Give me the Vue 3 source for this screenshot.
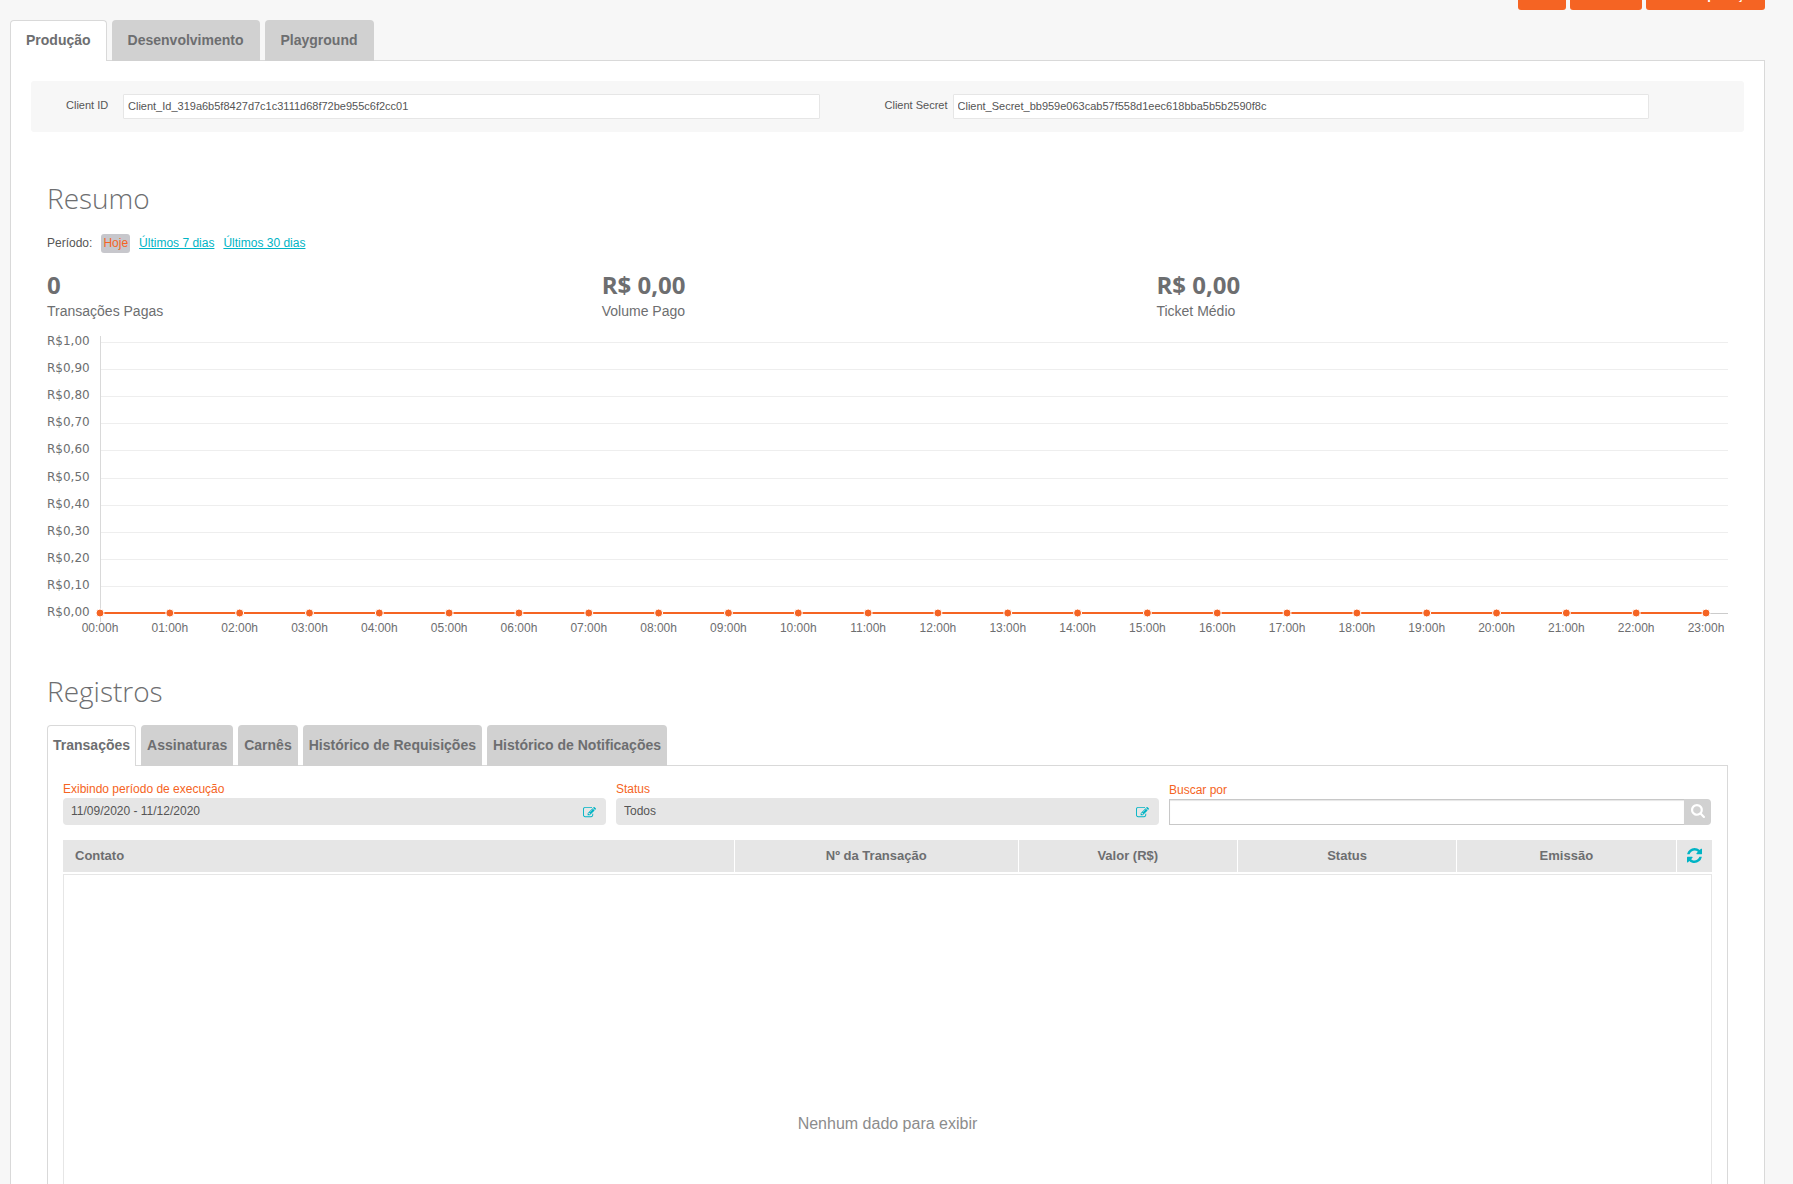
<script setup>
import { ref } from 'vue'

const environments = ['Produção', 'Desenvolvimento', 'Playground']
const environment = ref('Produção')

const clientId = ref('Client_Id_319a6b5f8427d7c1c3111d68f72be955c6f2cc01')
const clientSecret = ref('Client_Secret_bb959e063cab57f558d1eec618bba5b5b2590f8c')

const periods = ['Hoje', 'Últimos 7 dias', 'Últimos 30 dias']
const period = ref('Hoje')

const stats = [
  { value: '0', label: 'Transações Pagas' },
  { value: 'R$ 0,00', label: 'Volume Pago' },
  { value: 'R$ 0,00', label: 'Ticket Médio' },
]

const baseY = 277
const rows = Array.from({ length: 11 }, (_, i) => ({
  label: 'R$' + (i / 10).toFixed(2).replace('.', ','),
  y: Math.round(baseY - i * 27.1),
}))

const lastPoint = 98.65
const hours = Array.from({ length: 24 }, (_, i) => ({
  label: String(i).padStart(2, '0') + ':00h',
  x: (i * lastPoint) / 23 + '%',
}))

const records = [
  'Transações',
  'Assinaturas',
  'Carnês',
  'Histórico de Requisições',
  'Histórico de Notificações',
]
const record = ref('Transações')
const status = ref('Todos')
const search = ref('')

const editIcon =
  'M888 1184l116-116-152-152-116 116v56h96v96h56zm440-720q-16-16-33 1l-350 350q-17 17-1 33t33-1l350-350q17-17 1-33zm80 594v190q0 119-84.500 203.500t-203.500 84.500h-832q-119 0-203.500-84.500t-84.500-203.500v-832q0-119 84.500-203.500t203.500-84.500h832q63 0 117 25 15 7 18 23 3 17-9 29l-49 49q-14 14-32 8-23-6-45-6h-832q-66 0-113 47t-47 113v832q0 66 47 113t113 47h832q66 0 113-47t47-113v-126q0-13 9-22l64-64q15-15 35-7t20 29zm-96-738l288 288-672 672h-288v-288zm444 132l-92 92-288-288 92-92q28-28 68-28t68 28l152 152q28 28 28 68t-28 68z'
</script>

<template>
  <div class="page">
    <header class="actions">
      <button type="button" class="action short"></button>
      <button type="button" class="action medium"></button>
      <button type="button" class="action long">+ Nova Aplicação</button>
    </header>

    <nav class="tabs">
      <button
        v-for="name in environments"
        :key="name"
        type="button"
        class="tab"
        :class="{ active: name === environment }"
        @click="environment = name"
      >{{ name }}</button>
    </nav>

    <main class="panel">
      <form class="credentials" @submit.prevent>
        <label for="client-id">Client ID</label>
        <input id="client-id" v-model="clientId" type="text" readonly />
        <label for="client-secret" class="second">Client Secret</label>
        <input id="client-secret" v-model="clientSecret" type="text" readonly />
      </form>

      <section class="summary">
        <h2>Resumo</h2>
        <div class="periods">
          <span>Período:</span>
          <a
            v-for="name in periods"
            :key="name"
            href="#"
            :class="{ active: name === period }"
            @click.prevent="period = name"
          >{{ name }}</a>
        </div>
        <div class="stats">
          <div v-for="stat in stats" :key="stat.label" class="stat">
            <strong>{{ stat.value }}</strong>
            <span>{{ stat.label }}</span>
          </div>
        </div>

        <div class="chart">
          <svg height="300">
            <g v-for="row in rows" :key="row.label">
              <rect x="0" :y="row.y" width="100%" height="1" :class="row.y === baseY ? 'axis' : 'rule'" />
              <text x="-53" :y="row.y + 3" class="amount">{{ row.label }}</text>
            </g>
            <rect x="0" y="0" width="1" height="286" class="side" />
            <rect x="0" :y="baseY - 1" :width="lastPoint + '%'" height="2" class="series" />
            <g v-for="hour in hours" :key="hour.label">
              <circle :cx="hour.x" :cy="baseY" r="4" class="point" />
              <text :x="hour.x" :y="baseY + 19" class="hour">{{ hour.label }}</text>
            </g>
          </svg>
        </div>
      </section>

      <section class="records">
        <h2>Registros</h2>
        <nav class="tabs">
          <button
            v-for="name in records"
            :key="name"
            type="button"
            class="tab compact"
            :class="{ active: name === record }"
            @click="record = name"
          >{{ name }}</button>
        </nav>

        <div class="box">
          <form class="filters" @submit.prevent>
            <div class="filter">
              <label for="range">Exibindo período de execução</label>
              <div class="field">
                <button id="range" type="button" class="control">11/09/2020 - 11/12/2020</button>
                <svg class="edit" viewBox="0 0 1792 1792"><path :d="editIcon" /></svg>
              </div>
            </div>
            <div class="filter">
              <label for="status">Status</label>
              <div class="field">
                <select id="status" v-model="status" class="control">
                  <option>Todos</option>
                </select>
                <svg class="edit" viewBox="0 0 1792 1792"><path :d="editIcon" /></svg>
              </div>
            </div>
            <div class="filter">
              <label for="search" class="tall">Buscar por</label>
              <div class="search">
                <input id="search" v-model="search" type="text" />
                <button type="submit" aria-label="Buscar">
                  <svg viewBox="64 128 1664 1664" width="14" height="14">
                    <path d="M1216 832q0-185-131.500-316.500t-316.500-131.500-316.500 131.500-131.500 316.500 131.500 316.500 316.500 131.500 316.500-131.500 131.500-316.500zm512 832q0 52-38 90t-90 38q-54 0-90-38l-343-342q-179 124-399 124-143 0-273.500-55.500t-225-150-150-225-55.500-273.500 55.500-273.500 150-225 225-150 273.500-55.500 273.500 55.500 225 150 150 225 55.500 273.500q0 220-124 399l343 343q37 37 37 90z" />
                  </svg>
                </button>
              </div>
            </div>
          </form>

          <table>
            <colgroup>
              <col class="contact" />
              <col class="number" />
              <col class="regular" />
              <col class="regular" />
              <col class="regular" />
              <col />
            </colgroup>
            <thead>
              <tr>
                <th class="start">Contato</th>
                <th>Nº da Transação</th>
                <th>Valor (R$)</th>
                <th>Status</th>
                <th>Emissão</th>
                <th>
                  <button type="button" class="refresh" aria-label="Atualizar">
                    <svg viewBox="0 0 1536 1536" width="15" height="15">
                      <path d="M1511 928q0 5-1 7-64 268-268 434.500t-478 166.500q-146 0-282.500-55t-243.500-157l-129 129q-19 19-45 19t-45-19-19-45v-448q0-26 19-45t45-19h448q26 0 45 19t19 45-19 45l-137 137q71 66 161 102t187 36q134 0 250-65t186-179q11-17 53-117 8-23 30-23h192q13 0 22.500 9.500t9.500 22.500zm25-800v448q0 26-19 45t-45 19h-448q-26 0-45-19t-19-45 19-45l138-138q-148-137-349-137-134 0-250 65t-186 179q-11 17-53 117-8 23-30 23h-199q-13 0-22.500-9.500t-9.500-22.500v-7q65-268 270-434.500t480-166.500q146 0 284 55.500t245 156.500l130-129q19-19 45-19t45 19 19 45z" />
                    </svg>
                  </button>
                </th>
              </tr>
            </thead>
            <tbody>
              <tr>
                <td colspan="6">Nenhum dado para exibir</td>
              </tr>
            </tbody>
          </table>
        </div>
      </section>
    </main>
  </div>
</template>

<style>
html,
body {
  margin: 0;
  background: #f7f7f7;
}
</style>

<style scoped>
.page,
.page * {
  box-sizing: border-box;
}

.page {
  height: 100vh;
  overflow: hidden;
  padding: 0 28px 0 10px;
  background: #f7f7f7;
  color: #555;
  font-family: 'Liberation Sans', Arial, sans-serif;
  font-size: 12px;
}

button,
input,
select {
  margin: 0;
  font-family: inherit;
}

.actions {
  display: flex;
  justify-content: flex-end;
  align-items: flex-end;
  gap: 4px;
  height: 10px;
  margin-bottom: 10px;
}

.action {
  flex: none;
  height: 28px;
  padding: 0 5px 2px;
  border: 0;
  border-radius: 3px;
  background: #f56423;
  color: #fff;
  font-size: 13px;
  font-weight: bold;
  line-height: 16px;
}

.short {
  width: 48px;
}

.medium {
  width: 72px;
}

.long {
  width: 119px;
}

.tabs {
  position: relative;
  display: flex;
  gap: 5px;
  margin-bottom: -1px;
}

.tab {
  height: 41px;
  padding: 0 16px 1px;
  border: 0;
  border-radius: 4px 4px 0 0;
  background: #d1d1d1;
  color: #6d6e70;
  font-size: 14px;
  font-weight: bold;
}

.tab.active {
  padding: 0 15px 2px;
  border: 1px solid #d9d9d9;
  border-bottom: 0;
  background: #fff;
}

.tab.compact {
  padding: 0 6px 2px;
}

.tab.compact.active {
  padding: 0 5px 3px;
}

.panel {
  min-height: 100%;
  padding: 20px;
  border: 1px solid #d9d9d9;
  background: #fff;
}

.credentials {
  display: grid;
  grid-template-columns: 57px 1fr 133px 1fr;
  padding: 13px 95px 13px 35px;
  border-radius: 3px;
  background: #f7f7f7;
  font-size: 11px;
}

.credentials label {
  line-height: 22px;
}

.credentials .second {
  padding-right: 5px;
  text-align: right;
}

.credentials input {
  min-width: 0;
  height: 25px;
  padding: 0 4px 2px;
  border: 1px solid #e6e6e6;
  border-radius: 1px;
  background: #fff;
  color: #555;
  font-size: 11px;
}

.summary {
  padding: 46px 16px 0;
}

.records {
  padding: 35px 16px 0;
}

h2 {
  margin: 0;
  color: #6d6e70;
  font-family: 'Open Sans', sans-serif;
  font-size: 28px;
  font-weight: 300;
  line-height: 40px;
}

.periods {
  display: flex;
  gap: 9px;
  margin-top: 16px;
  line-height: 18px;
}

.periods a {
  color: #00b4c5;
}

.periods .active {
  height: 19px;
  padding: 0 2px;
  border-radius: 3px;
  background: #c7c7cc;
  color: #f56423;
  text-decoration: none;
}

.stats {
  display: flex;
  margin-top: 16px;
  color: #6d6e70;
}

.stat {
  width: 33%;
}

.stat strong,
.stat span {
  display: block;
}

.stat strong {
  font-family: 'Open Sans', sans-serif;
  font-size: 24px;
  line-height: 32px;
}

.stat span {
  font-size: 14px;
  line-height: 20px;
}

.chart {
  margin-top: 15px;
  padding-left: 53px;
}

.chart svg {
  display: block;
  width: 100%;
  overflow: visible;
}

.rule {
  fill: #eee;
}

.axis {
  fill: #ccc;
}

.side {
  fill: #d9d9d9;
}

.series {
  fill: #f56423;
}

.point {
  fill: #f56423;
  stroke: #fff;
  stroke-width: 1px;
}

.amount {
  fill: #6d6e70;
  font-family: 'DejaVu Sans', sans-serif;
  font-size: 12px;
}

.hour {
  fill: #6d6e70;
  font-size: 12px;
  text-anchor: middle;
}

.records .tabs {
  margin-top: 14px;
}

.box {
  padding: 15px;
  border: 1px solid #d9d9d9;
  background: #fff;
}

.filters {
  display: grid;
  grid-template-columns: repeat(3, 1fr);
  gap: 10px;
}

.filter label {
  display: block;
  height: 17px;
  color: #f56423;
  line-height: 16px;
}

.filter .tall {
  height: 18px;
  line-height: 18px;
}

.field {
  position: relative;
}

.control {
  display: block;
  width: 100%;
  height: 27px;
  padding: 0 8px 2px;
  border: 0;
  border-radius: 4px;
  background: #e6e6e6;
  color: #555;
  font-size: 12px;
  text-align: left;
  appearance: none;
}

.edit {
  position: absolute;
  top: 8px;
  right: 10px;
  width: 13px;
  height: 13px;
  fill: #00b4c5;
  pointer-events: none;
}

.search {
  display: flex;
  height: 26px;
  padding-right: 1px;
}

.search input {
  flex: 1;
  min-width: 0;
  padding: 0 6px;
  border: 1px solid #c8c8c8;
  border-right: 0;
  background: #fff;
  box-shadow: inset 0 1px 1px #e6e6e6;
  font-size: 12px;
}

.search button {
  display: flex;
  align-items: center;
  justify-content: center;
  width: 27px;
  padding: 0 0 2px;
  border: 0;
  border-radius: 0 4px 4px 0;
  background: #d1d1d1;
}

.search svg {
  fill: #fff;
}

table {
  width: 100%;
  margin-top: 15px;
  border-collapse: separate;
  border-spacing: 0;
  table-layout: fixed;
}

.contact {
  width: 40.75%;
}

.number {
  width: 17.2%;
}

.regular {
  width: 13.3%;
}

th {
  height: 34px;
  padding: 0 0 1px;
  border-right: 1px solid #fff;
  border-bottom: 2px solid #fff;
  background: #e6e6e6;
  color: #6d6e70;
  font-size: 13px;
}

th:last-child {
  border-right: 0;
}

th.start {
  padding-left: 12px;
  text-align: left;
}

.refresh {
  display: block;
  margin: 0 auto;
  padding: 0;
  border: 0;
  background: none;
}

.refresh svg {
  display: block;
  fill: #00b4c5;
}

td {
  height: 500px;
  padding: 0;
  border: 1px solid #e6e6e6;
  color: #8c8c8c;
  font-size: 16px;
  text-align: center;
}
</style>
